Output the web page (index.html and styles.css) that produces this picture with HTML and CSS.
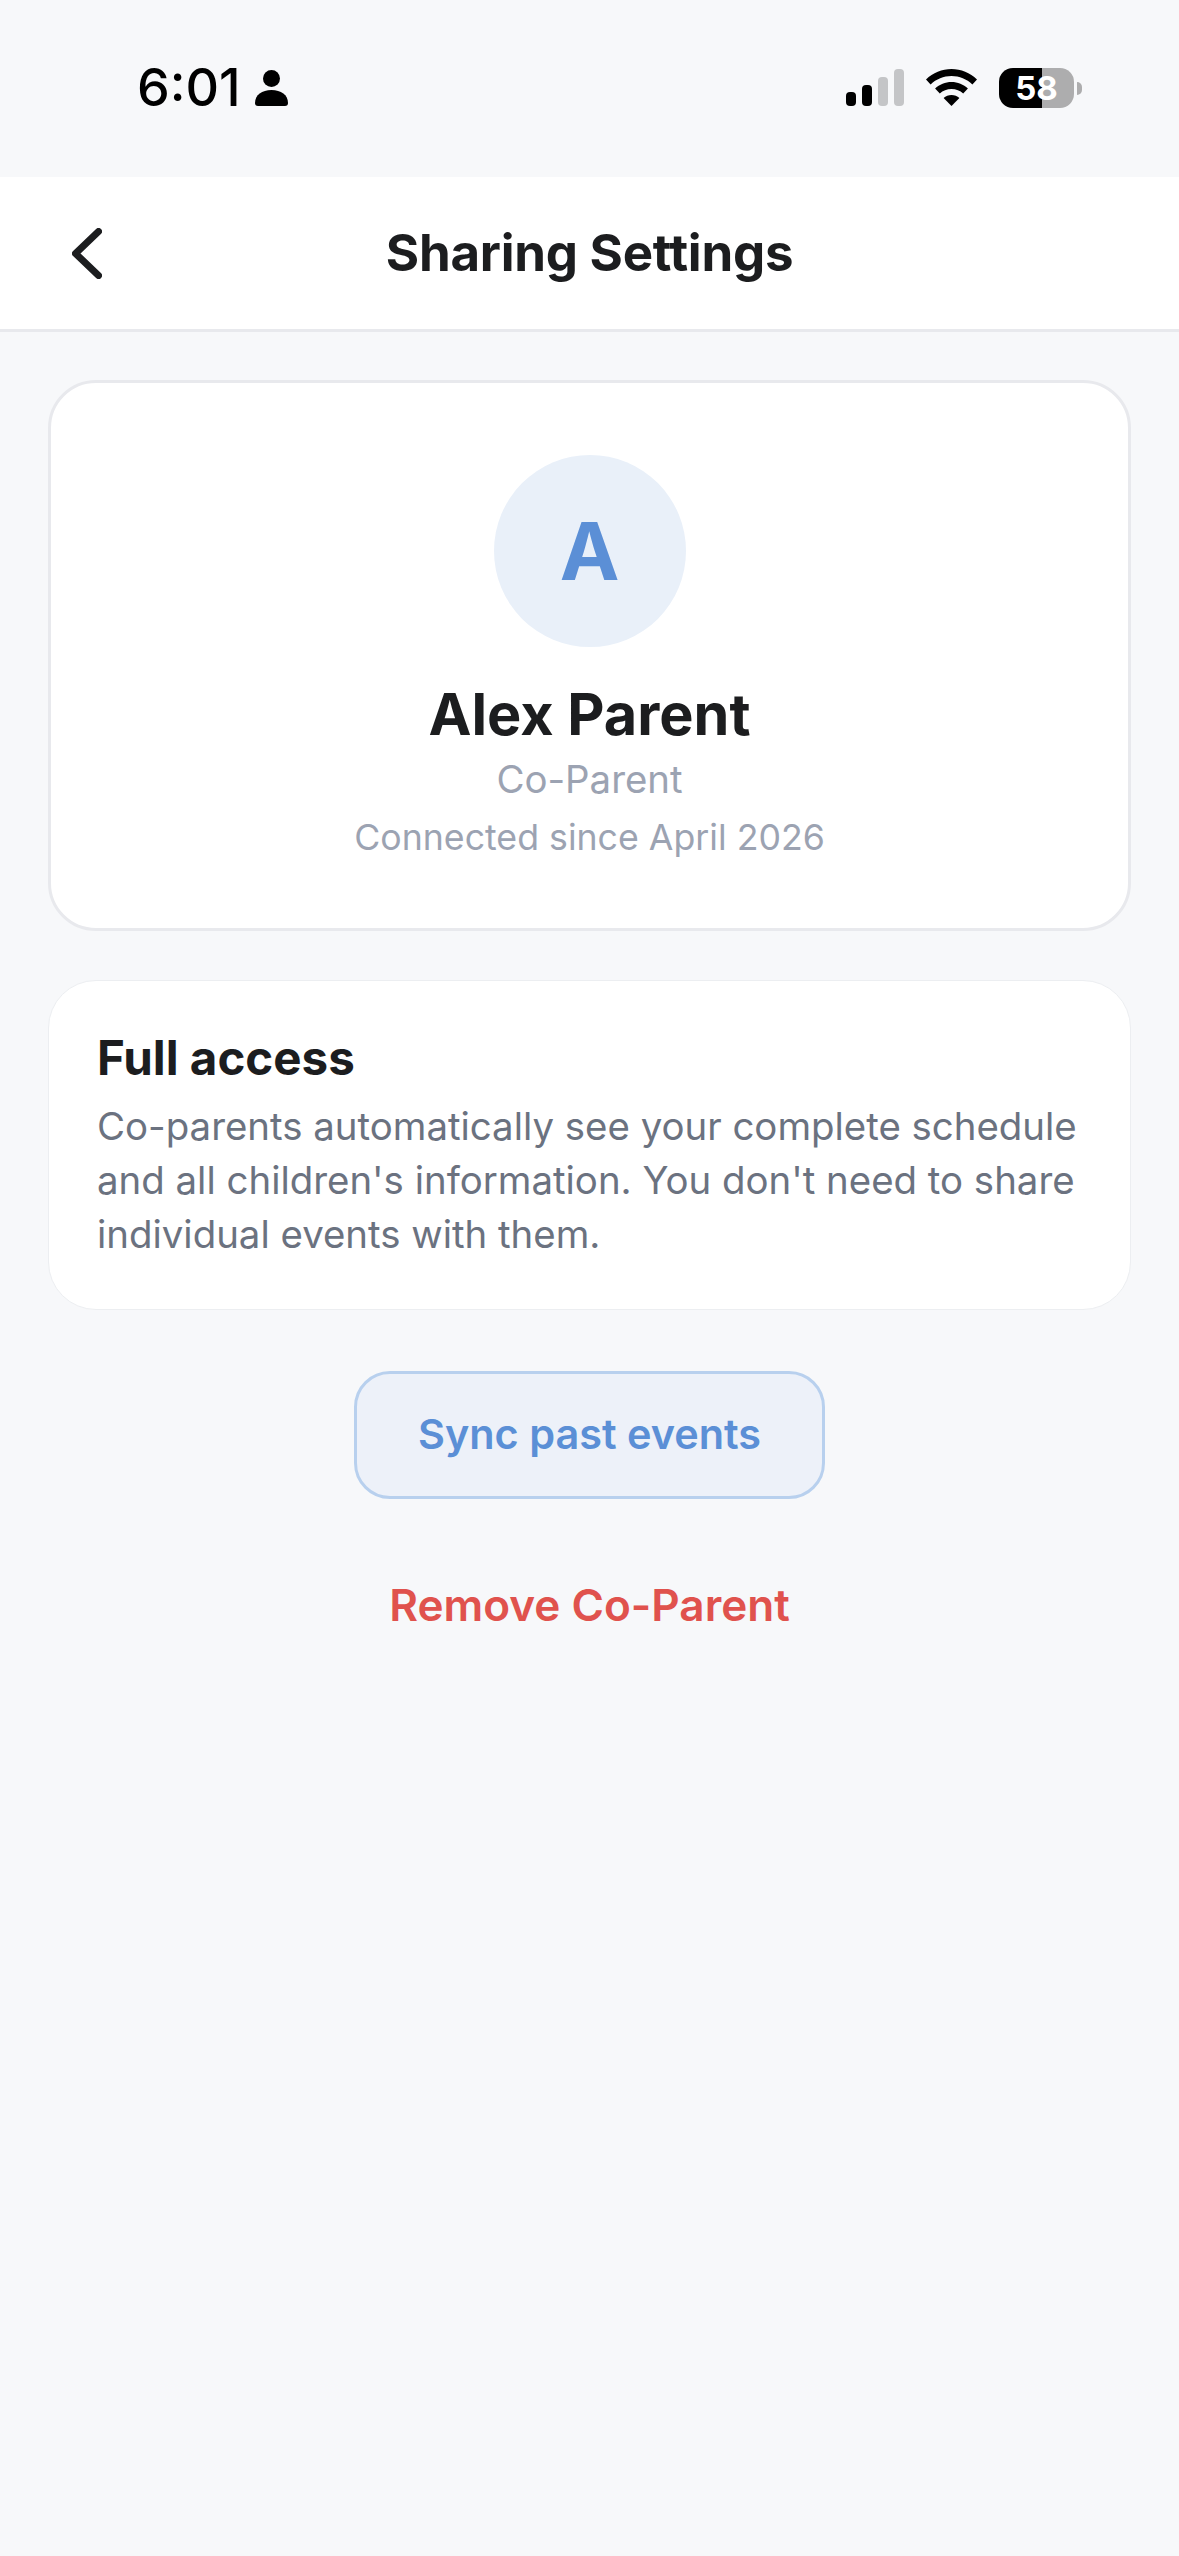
FILE: index.html
```html
<!DOCTYPE html>
<html lang="en">
  <head>
    <meta charset="UTF-8" />
    <meta name="viewport" content="width=device-width, initial-scale=1.0" />
    <title>Sharing Settings</title>
    <link rel="stylesheet" href="styles.css">
  </head>
  <body>
    <!-- Status bar -->
    <div class="status-bar">
      <div class="status-left">
        <span class="time">6:01</span>
        <svg class="person" viewBox="0 0 33 36" width="33" height="36">
          <circle cx="16.5" cy="8.5" r="8.5" fill="#000" />
          <path d="M0 33c0-8 7-13 16.5-13S33 25 33 33c0 2-1 3-3 3H3c-2 0-3-1-3-3z" fill="#000" />
        </svg>
      </div>
      <div class="status-right">
        <svg class="signal" viewBox="0 0 58 37" width="58" height="37">
          <rect x="0" y="23" width="10" height="14" rx="4" fill="#000" />
          <rect x="16" y="16" width="10" height="21" rx="4" fill="#000" />
          <rect x="32" y="8" width="10" height="29" rx="4" fill="#c4c5c7" />
          <rect x="48" y="0" width="10" height="37" rx="4" fill="#c4c5c7" />
        </svg>
        <svg class="wifi" viewBox="0 0 51 37" width="51" height="37">
          <path d="M25.5 0C35 0 44 3.800 51 10.500l-4.600 5C40.700 10 33.400 7 25.500 7S10.300 10 4.600 15.500L0 10.500C7 3.800 16 0 25.500 0z" fill="#000" />
          <path d="M25.500 13c6.200 0 12 2.400 16.400 6.500l-4.700 5C34.100 21.700 30 20 25.500 20s-8.600 1.700-11.700 4.500l-4.700-5C13.500 15.400 19.300 13 25.500 13z" fill="#000" />
          <path d="M25.500 26c3 0 5.800 1.100 7.900 3L25.500 37l-7.900-8c2.100-1.900 4.900-3 7.900-3z" fill="#000" />
        </svg>
        <div class="battery">
          <span class="battery-level">58</span>
          <span class="battery-cap"></span>
        </div>
      </div>
    </div>

    <!-- Header -->
    <div class="header">
      <svg class="back" viewBox="0 0 30 51" width="30" height="51">
        <path d="M26.500 3.500L3.500 25.500l23 22" fill="none" stroke="#1c1d1f" stroke-width="7" stroke-linecap="round" stroke-linejoin="round" />
      </svg>
      <h1 class="title">Sharing Settings</h1>
    </div>

    <div class="content">
      <!-- Co-parent card -->
      <div class="profile-card">
        <div class="avatar">A</div>
        <div class="name">Alex Parent</div>
        <div class="role">Co-Parent</div>
        <div class="since">Connected since April 2026</div>
      </div>

      <!-- Access info -->
      <div class="info-card">
        <div class="info-title">Full access</div>
        <p class="info-text">Co-parents automatically see your complete schedule and all children's information. You don't need to share individual events with them.</p>
      </div>

      <button class="sync-btn">Sync past events</button>
      <button class="remove-btn">Remove Co-Parent</button>
    </div>
  </body>
</html>
```

FILE: styles.css
```css
/* Page */
body {
  font-family: 'Inter', sans-serif;
  background-color: #f7f8fa;
  margin: 0;
  padding: 0;
  height: 2556px;
  overflow: hidden;
}

/* Status bar */
.status-bar {
  height: 177px;
  display: flex;
  justify-content: space-between;
  align-items: flex-start;
  padding: 69px 105px 0 137px;
  box-sizing: border-box;
}

.status-left {
  display: flex;
  align-items: center;
  gap: 14px;
  height: 37px;
}

.time {
  font-size: 52px;
  line-height: 37px;
  font-weight: 500;
  color: #000;
}

.status-right {
  display: flex;
  align-items: center;
  gap: 22px;
  height: 37px;
}

.battery {
  position: relative;
  width: 75px;
  height: 40px;
  border-radius: 14px;
  background: linear-gradient(to right, #000 43px, #adadae 43px);
  display: flex;
  align-items: center;
  justify-content: center;
}

.battery-level {
  color: #fff;
  font-size: 33px;
  font-weight: 700;
  line-height: 40px;
}

.battery-cap {
  position: absolute;
  left: 78px;
  top: 14px;
  width: 5px;
  height: 13px;
  border-radius: 0 7px 7px 0;
  background-color: #adadae;
}

/* Header */
.header {
  height: 155px;
  box-sizing: border-box;
  background-color: #fff;
  border-bottom: 3px solid #e8e9ed;
  padding-bottom: 2px;
  display: flex;
  align-items: center;
  justify-content: center;
  position: relative;
}

.back {
  position: absolute;
  left: 72px;
  top: 51px;
}

.title {
  margin: 0;
  font-size: 51px;
  font-weight: 700;
  letter-spacing: -0.25px;
  color: #1c1d1f;
}

/* Content */
.content {
  padding: 48px 48px 0;
  display: flex;
  flex-direction: column;
  align-items: center;
}

.profile-card {
  width: 100%;
  height: 551px;
  box-sizing: border-box;
  background-color: #fff;
  border: 3px solid #e8e9ed;
  border-radius: 48px;
  padding-top: 72px;
  display: flex;
  flex-direction: column;
  align-items: center;
}

.avatar {
  width: 192px;
  height: 192px;
  padding-bottom: 2px;
  box-sizing: border-box;
  border-radius: 50%;
  background-color: #e9f0f9;
  color: #5b8fd6;
  font-size: 80px;
  font-weight: 700;
  display: flex;
  align-items: center;
  justify-content: center;
}

.name {
  margin-top: 31px;
  font-size: 57.600px;
  line-height: 72px;
  font-weight: 700;
  color: #1c1d1f;
}

.role {
  margin-top: 5px;
  font-size: 38.400px;
  line-height: 48px;
  color: #9ca3b2;
}

.since {
  margin-top: 10px;
  font-size: 35.700px;
  line-height: 48px;
  color: #9ca3b2;
}

.info-card {
  width: 100%;
  height: 330px;
  box-sizing: border-box;
  margin-top: 49px;
  background-color: #fff;
  border: 1.500px solid #eceef1;
  border-radius: 48px;
  padding: 47px 30px 0 48px;
}

.info-title {
  font-size: 47.500px;
  line-height: 60px;
  font-weight: 700;
  color: #1c1d1f;
}

.info-text {
  margin: 11px 0 0;
  font-size: 38.400px;
  line-height: 54px;
  color: #6b7280;
}

/* Buttons */
.sync-btn {
  margin-top: 61px;
  width: 471px;
  height: 128px;
  box-sizing: border-box;
  padding: 0 0 2px;
  background-color: #edf1f9;
  border: 3px solid #b8d0ee;
  border-radius: 36px;
  color: #5b8fd6;
  font-family: inherit;
  font-size: 41.400px;
  font-weight: 600;
}

.remove-btn {
  margin-top: 79px;
  background: none;
  border: none;
  padding: 0;
  color: #e0524d;
  font-family: inherit;
  font-size: 44.100px;
  line-height: 54px;
  font-weight: 600;
}
```
